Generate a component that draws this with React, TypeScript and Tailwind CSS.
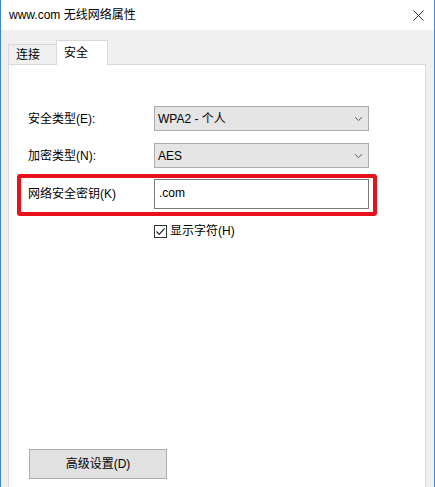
import { useState } from "react"

function Chevron() {
  return (
    <svg width="9" height="6" viewBox="0 0 9 6" className="shrink-0">
      <path d="M1 1.2 L4.5 4.6 L8 1.2" fill="none" stroke="#5f5f5f" strokeWidth="1" />
    </svg>
  )
}

function Select({ value }: { value: string }) {
  return (
    <div className="w-[215px] h-[25px] bg-[#e5e5e5] border border-[#acacac] flex items-center justify-between pl-[3px] pr-[5px]">
      <span className="leading-[14px]">{value}</span>
      <Chevron />
    </div>
  )
}

export default function App() {
  const [showChars, setShowChars] = useState(true)

  return (
    <div className="w-[435px] h-[487px] overflow-hidden flex flex-col bg-[#f0f0f0] border-x border-[#3b8ad6] text-[12px] text-black [font-family:'Liberation_Sans','Noto_Sans_CJK_SC',sans-serif]">
      {/* title bar */}
      <div className="h-[30px] shrink-0 bg-white flex items-center justify-between pl-[8px] pr-[10px]">
        <span className="leading-[14px]">www.com 无线网络属性</span>
        <svg width="11" height="11" viewBox="0 0 11 11">
          <path d="M0.5 0.5 L10.5 10.5 M10.5 0.5 L0.5 10.5" stroke="#333" strokeWidth="1" />
        </svg>
      </div>

      {/* tabs */}
      <div className="pt-[10px] pl-[7px] flex items-end shrink-0">
        <div className="w-[48px] h-[20px] border border-r-0 border-b-0 border-[#d9d9d9] flex items-center pl-[7px]">
          <span className="leading-[14px]">连接</span>
        </div>
        <div className="relative z-10 -mb-px w-[52px] h-[25px] bg-white border border-b-0 border-[#d9d9d9] pl-[7px] pt-[3px]">
          <span className="leading-[14px]">安全</span>
        </div>
      </div>

      {/* panel */}
      <div className="ml-[7px] mr-[8px] flex-1 bg-white border border-b-0 border-[#d9d9d9] flex flex-col pt-[41px] pl-[19px]">
        <div className="flex items-center">
          <span className="w-[126px] leading-[14px]">安全类型(E):</span>
          <Select value="WPA2 - 个人" />
        </div>
        <div className="flex items-center mt-[12px]">
          <span className="w-[126px] leading-[14px]">加密类型(N):</span>
          <Select value="AES" />
        </div>

        <div className="relative flex items-center mt-[11px] self-start">
          <span className="w-[126px] leading-[14px]">网络安全密钥(K)</span>
          <div className="w-[215px] h-[30px] border border-[#7a7a7a] bg-white flex items-center pl-[4px] pb-[3px]">
            <span className="leading-[14px]">.com</span>
          </div>
          <div className="absolute -top-[5px] -bottom-[7px] -left-[11px] -right-[8px] border-4 border-[#e8101a] rounded-[3px]" />
        </div>

        <label className="flex items-center gap-[3px] mt-[15px] pl-[126px] cursor-default">
          <span
            className="w-[13px] h-[13px] border border-[#333] bg-white flex items-center justify-center"
            onClick={() => setShowChars(!showChars)}
          >
            {showChars && (
              <svg width="11" height="11" viewBox="0 0 11 11">
                <path d="M1.5 5.5 L4.2 8.3 L9.6 2.4" fill="none" stroke="#222" strokeWidth="1.2" />
              </svg>
            )}
          </span>
          <span className="leading-[14px]">显示字符(H)</span>
        </label>

        <button className="mt-auto mb-[8px] ml-[1px] w-[138px] h-[30px] bg-[#e1e1e1] border border-[#adadad] leading-[14px]">
          高级设置(D)
        </button>
      </div>
    </div>
  )
}
